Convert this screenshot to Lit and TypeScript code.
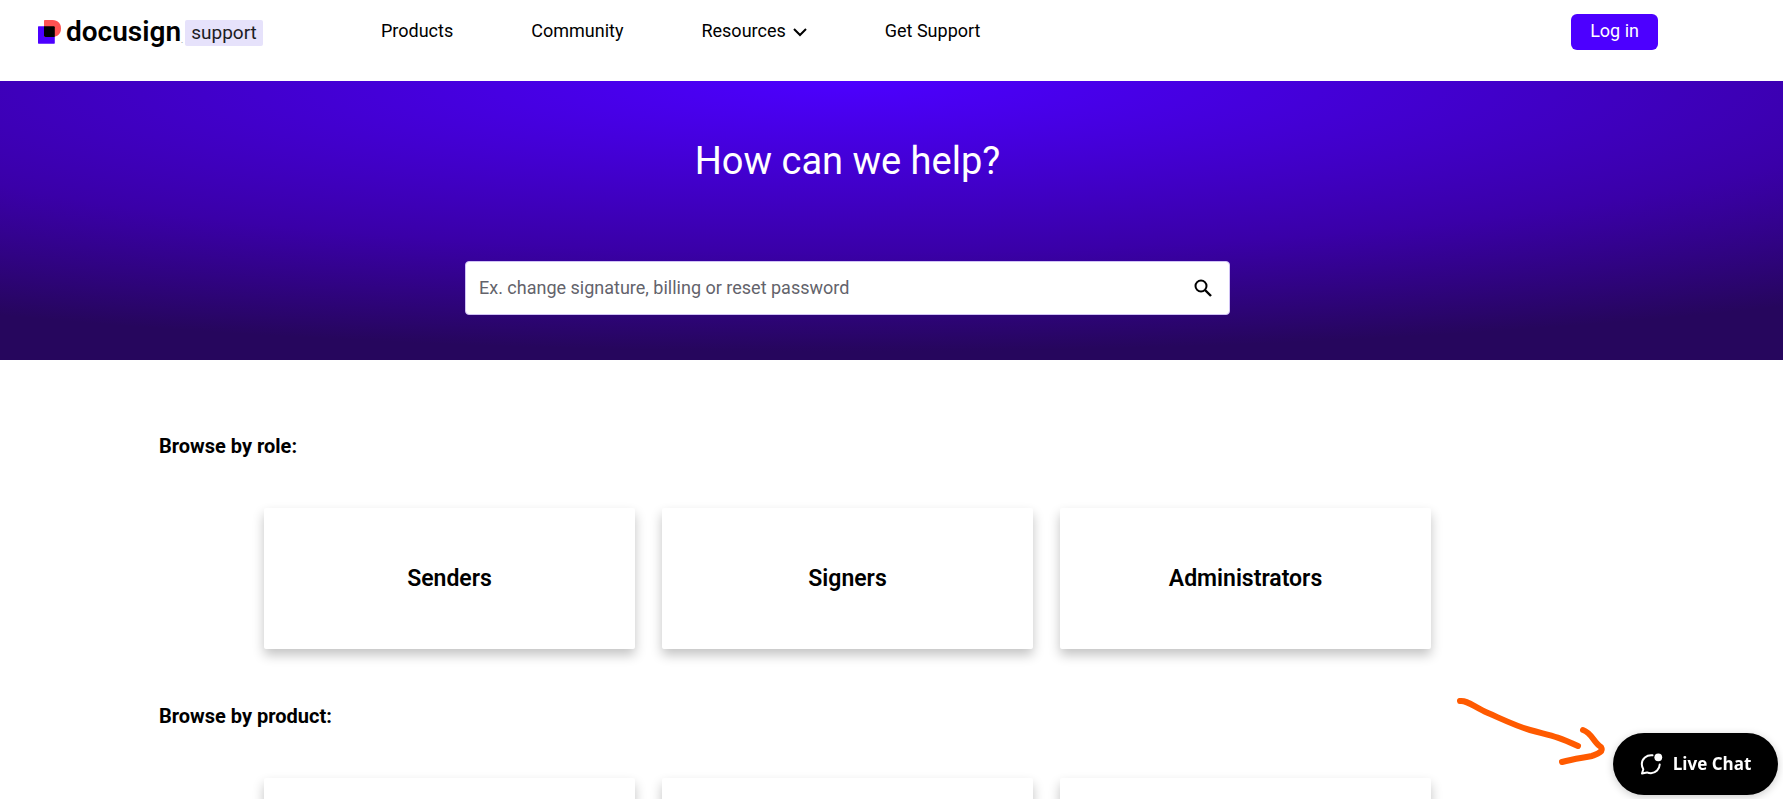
import { LitElement, html, css } from "lit";
import { customElement } from "lit/decorators.js";

@customElement("site-header")
class SiteHeader extends LitElement {
  static styles = css`
    :host { display: block; }
    .bar { box-sizing: border-box; max-width: 1695px; min-height: 81px; padding: 14px 37px 0; display: flex; align-items: flex-start; }
    a { color: inherit; text-decoration: none; }
    .logo { display: flex; align-items: center; width: 344px; height: 36px; flex: none; }
    .mark { width: 24px; height: 24px; margin: 0 4px 0 1px; }
    .word { font-size: 28px; line-height: 36px; font-weight: 600; }
    .tm { font-size: 8px; align-self: flex-end; line-height: 18px; color: #777; }
    .tag { margin-left: 2px; margin-top: 2px; padding: 0 6px; font-size: 19px; line-height: 26px; background: #e6e2fb; border-radius: 2px; color: #1c1c24; }
    nav { display: flex; gap: 78px; flex: 1; font-size: 18px; line-height: 34px; }
    nav a { display: flex; align-items: center; gap: 7px; white-space: nowrap; }
    nav svg { margin-top: 2px; }
    .login { height: 36px; padding: 0 19px 2px; margin: 0; border: 0; border-radius: 6px; background: #4c00ff; color: #fff; font: 400 18px/32px Roboto, sans-serif; }
  `;
  render() {
    return html`
      <header class="bar">
        <a class="logo" href="#">
          <svg class="mark" viewBox="0 0 24 24" aria-hidden="true">
            <rect x="0" y="6.3" width="16.8" height="17.4" rx="0.6" fill="#4c00ff" />
            <path d="M6 .8Q6 0 6.800 0H14.500C20 0 23 3.600 23 8.500S20 17 14.500 17H6z" fill="#ff5252" />
            <path d="M6 6.300H15.800Q16.800 6.300 16.800 7.300V16.700Q15.800 17 14.500 17H7.500Q6 17 6 15.500z" fill="#000" />
          </svg>
          <span class="word">docusign</span><span class="tm">.</span>
          <span class="tag">support</span>
        </a>
        <nav>
          <a href="#">Products</a>
          <a href="#">Community</a>
          <a href="#">Resources
            <svg width="14" height="10" viewBox="0 0 14 10" fill="none" stroke="#000" stroke-width="2" aria-hidden="true"><path d="M1 2l6 6 6-6" /></svg>
          </a>
          <a href="#">Get Support</a>
        </nav>
        <button class="login">Log in</button>
      </header>
    `;
  }
}

@customElement("help-hero")
class HelpHero extends LitElement {
  static styles = css`
    :host { display: block; background: radial-gradient(ellipse 1780px 285px at 848px 0, #4c00ff 0%, #3a00a8 60%, #26065d 95%); }
    .inner { max-width: 1695px; padding: 54px 0 45px; display: flex; flex-direction: column; align-items: center; }
    h1 { margin: 0; font-size: 38px; line-height: 52px; font-weight: 400; color: #fff; }
    form { box-sizing: border-box; width: 100%; max-width: 765px; height: 54px; margin-top: 74px; display: flex; align-items: center; background: #fff; border: 1px solid #d0c2f5; border-radius: 4px; }
    input { flex: 1; min-width: 0; border: 0; outline: 0; background: none; padding: 0 13px 1px; font: 400 18px/24px Roboto, sans-serif; color: #111; }
    input::placeholder { color: #63636b; opacity: 1; }
    button { border: 0; background: none; padding: 0; margin-right: 16px; width: 20px; height: 20px; }
    svg { display: block; }
  `;
  render() {
    return html`
      <section class="inner">
        <h1>How can we help?</h1>
        <form role="search" @submit=${(e: Event) => e.preventDefault()}>
          <input type="text" aria-label="Search" placeholder="Ex. change signature, billing or reset password" />
          <button type="submit" aria-label="Search">
            <svg width="20" height="20" viewBox="0 0 20 20" fill="none" stroke="#000" stroke-width="2" aria-hidden="true"><circle cx="8" cy="8" r="5.5" /><path d="M12 12l6 6" stroke-width="2.400" /></svg>
          </button>
        </form>
      </section>
    `;
  }
}

@customElement("live-chat")
class LiveChat extends LitElement {
  static styles = css`
    :host { position: fixed; right: 5px; bottom: 4px; display: block; }
    .chat { box-sizing: border-box; width: 165px; height: 62px; display: flex; align-items: center; justify-content: center; gap: 10px; border: 0; border-radius: 31px; padding: 0; background: #000; color: #fff; font: 700 17px/24px "Open Sans", sans-serif; box-shadow: 0 2px 8px rgba(0, 0, 0, 0.2); }
    .arrow { position: absolute; right: 174px; bottom: 26px; overflow: visible; pointer-events: none; }
  `;
  render() {
    return html`
      <svg class="arrow" width="150" height="74" viewBox="0 0 150 74" fill="none" stroke="#ff5a00" stroke-width="6" stroke-linecap="round" stroke-linejoin="round" aria-hidden="true">
        <path d="M6 6C13 5 20 12 34 18C50 25 62 31 76 35C98 41 100 40 124 51" />
        <path d="M129 35C138 38 140 48 147 52C150 57 143 59 138 61C128 63 119 64 108 67" />
      </svg>
      <button class="chat">
        <svg width="23" height="22" viewBox="0 0 23 22" fill="none" stroke="#fff" stroke-width="2" stroke-linecap="round" stroke-linejoin="round" aria-hidden="true">
          <path d="M12.500 2.300C6.500 1.600 1.800 5.800 1.800 11c0 2 .5 3.700 1.500 5.200L2 20.500l5-1.100c1.300.6 2.600.8 4 .8 4.800-.2 8.500-3.900 8.700-8.700" />
          <circle cx="18.300" cy="4.300" r="3.900" fill="#fff" stroke="none" />
        </svg>
        Live Chat
      </button>
    `;
  }
}

@customElement("app-root")
class AppRoot extends LitElement {
  static styles = css`
    :host { display: block; height: 100vh; overflow: hidden; background: #fff; color: #000; font-family: Roboto, sans-serif; }
    main { max-width: 1695px; padding-top: 71px; }
    section { margin-bottom: 52px; }
    h2 { margin: 0 0 47px 159px; font-size: 20px; line-height: 30px; font-weight: 700; }
    .cards { max-width: 1167px; margin: 0 auto; display: grid; grid-template-columns: repeat(3, 1fr); gap: 27px; }
    .card { min-height: 141px; display: flex; align-items: center; justify-content: center; border-radius: 2px; background: #fff; box-shadow: 0 6px 12px rgba(0, 0, 0, 0.24); color: #000; text-decoration: none; font-size: 23px; line-height: 32px; font-weight: 600; }
  `;
  render() {
    return html`
      <site-header></site-header>
      <help-hero></help-hero>
      <main>
        <section>
          <h2>Browse by role:</h2>
          <div class="cards">
            ${["Senders", "Signers", "Administrators"].map((name) => html`<a class="card" href="#">${name}</a>`)}
          </div>
        </section>
        <section>
          <h2>Browse by product:</h2>
          <div class="cards">
            ${[0, 1, 2].map(() => html`<div class="card"></div>`)}
          </div>
        </section>
      </main>
      <live-chat></live-chat>
    `;
  }
}
